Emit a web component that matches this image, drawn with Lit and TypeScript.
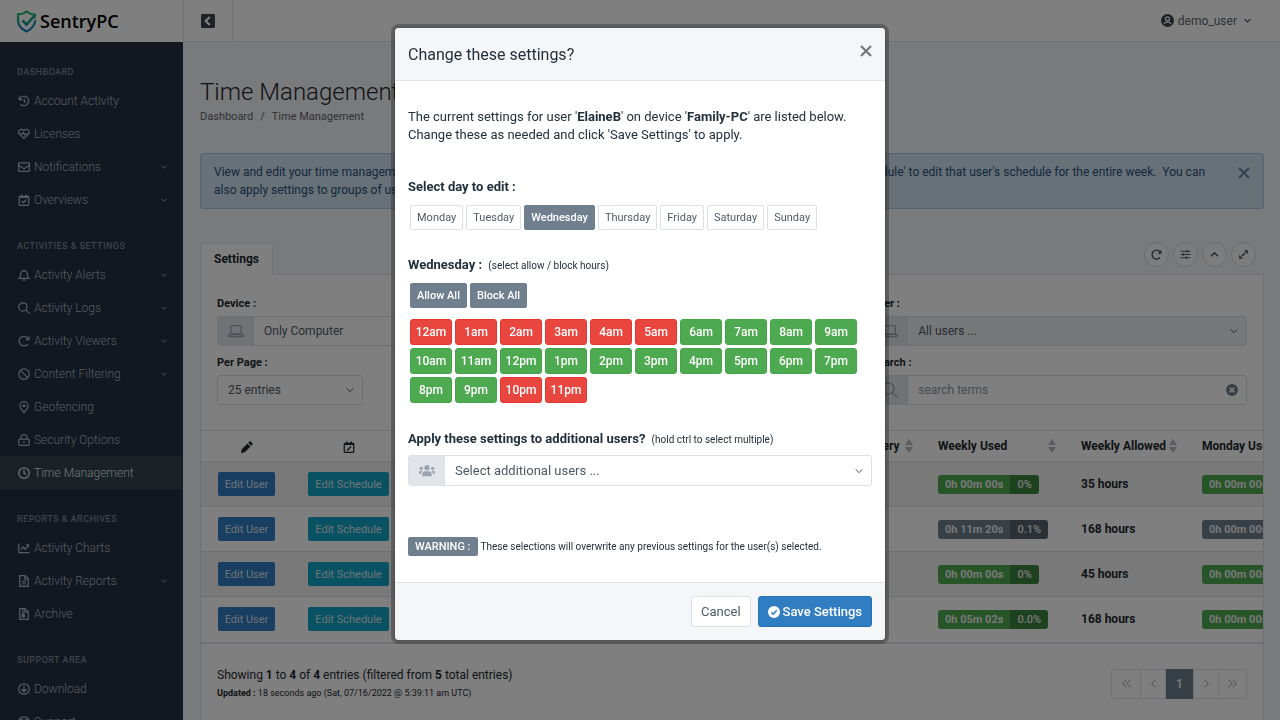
import { LitElement, html, css, svg, nothing } from "lit";
import { customElement, property, state } from "lit/decorators.js";
import { classMap } from "lit/directives/class-map.js";

const glyphs: Record<string, unknown> = {
  history: svg`<path d="M2.500 3v6h6M3 8.500A9.500 9.500 0 1 1 5 18.500" /><path d="M12.500 7v5.500l3.500 2.500" />`,
  heart: svg`<path d="M12 21 3 12.200a5.800 5.800 0 0 1 0-8 5.600 5.600 0 0 1 8 0l1 1 1-1a5.600 5.600 0 0 1 8 0 5.800 5.800 0 0 1 0 8z" /><path d="M4.500 11.500h4.500l1.500-2.500 3 5 1.500-2.500h4.500" />`,
  mail: svg`<rect x="1.200" y="3.500" width="21.600" height="17" rx="1.500" /><path d="M1.500 8.500 12 15.500l10.500-7" />`,
  calendarCheck: svg`<rect x="2.500" y="4.500" width="19" height="18" rx="1.500" /><path d="M7.500 1V6M16.500 1V6M3 6.500h18" stroke-width="3" /><path d="m7.500 14 3.500 3.500 6-6.500" />`,
  calendarEdit: svg`<rect x="2.500" y="4.500" width="19" height="18" rx="1.500" /><path d="M7.500 1V6M16.500 1V6M3 6.500h18" stroke-width="3" /><path d="m8 19 8-8" stroke-width="3" />`,
  bell: svg`<path d="M2.500 18.500h19c-2.300-2.200-3-4.500-3-8.500a6.500 6.500 0 0 0-13 0c0 4-.700 6.300-3 8.500zM12 1V4" /><path d="M9.500 22h5" stroke-width="3" />`,
  search: svg`<circle cx="9.800" cy="9.800" r="8.300" /><path d="m15.800 15.800 7.500 7.500" />`,
  rotate: svg`<path d="M19.500 18.500A9.700 9.700 0 1 1 19 5.500" /><path d="M23 1.500v9h-9z" fill="currentColor" stroke="none" />`,
  ban: svg`<circle cx="12" cy="12" r="10.500" /><path d="m4.800 4.800 14.400 14.400" />`,
  pin: svg`<path d="M12 23C6.500 16.800 4 13.300 4 9.300a8 8 0 0 1 16 0c0 4-2.500 7.500-8 13.700z" /><circle cx="12" cy="9.500" r="3.200" fill="currentColor" stroke="none" />`,
  lock: svg`<rect x="1.800" y="10" width="20.400" height="12.700" rx="1.500" /><path d="M6 9.500V7a6 6 0 0 1 12 0v2.500" /><path d="M12 14v4.500" />`,
  clock: svg`<circle cx="12" cy="12" r="10.500" /><path d="M12 5.500v7l4.500 2.500" />`,
  chart: svg`<path d="M1.500 3v18H23M6 15.500l4.500-5.500 4 4.500 6-8" /><path d="M15 4.500h7v7z" fill="currentColor" stroke="none" />`,
  file: svg`<path d="M3.500 1.200H14l6.500 6v15.600h-17z" /><path d="M13.500 1.500v6.500h6.500M8 12.500h8M8 17.500h8" />`,
  zip: svg`<path d="M3.500 1.200H14l6.500 6v15.600h-17z" /><path d="M13.500 1.500v6.500h6.500M10 3v9" /><rect x="8.500" y="13" width="4" height="5" fill="currentColor" />`,
  download: svg`<circle cx="12" cy="12" r="10.500" /><path d="M12 5.500v11.500M7 12.500l5 5 5-5" />`,
  lifebuoy: svg`<circle cx="12" cy="12" r="10.500" /><circle cx="12" cy="12" r="4" /><path d="m4.500 4.500 4.500 4.500M19.500 4.500l-4.500 4.500M4.500 19.500l4.500-4.500M19.500 19.500l-4.500-4.500" />`,
  down: svg`<path d="m2 7 10 10 10-10" />`,
  up: svg`<path d="m4.500 16 7.500-8 7.500 8" />`,
  left: svg`<path d="m15.500 4.500-7.500 7.500 7.500 7.500" />`,
  right: svg`<path d="m8.500 4.500 7.500 7.500-7.500 7.500" />`,
  first: svg`<path d="m11.500 4-8 8 8 8M20.500 4l-8 8 8 8" />`,
  last: svg`<path d="m12.500 4 8 8-8 8M3.500 4l8 8-8 8" />`,
  close: svg`<path d="m2 2 20 20M22 2 2 22" />`,
  laptop: svg`<rect x="4" y="4" width="16" height="12.500" rx="1.500" /><path d="M1 17.500h22c0 2-1 3-3 3H4c-2 0-3-1-3-3z" />`,
  sliders: svg`<path d="M1 5h22M1 12h22M1 19h22" stroke-width="2" /><path d="M16 2.500v5M7.500 9.500v5M14 16.500v5" stroke-width="3" />`,
  expand: svg`<path d="m8 16 8-8" /><path d="M13 2.500h8.500v8.500zM2.500 13v8.500h8.500z" fill="currentColor" stroke="none" />`,
  pencil: svg`<path d="m0 24 1.500-7.500L13 5l6 6L7.500 22.500zM14.500 3.500l2.500-2.500a1.800 1.800 0 0 1 2.500 0l3.500 3.500a1.800 1.800 0 0 1 0 2.500l-2.500 2.500z" fill="currentColor" stroke="none" />`,
  user: svg`<circle cx="12" cy="12" r="12" fill="currentColor" stroke="none" /><circle cx="12" cy="9" r="3.600" stroke="#fff" fill="none" stroke-width="2.200" /><path d="M5.500 18.500c1-3 3.500-3.500 6.500-3.500s5.500.500 6.500 3.500" stroke="#fff" stroke-width="2.200" />`,
  clear: svg`<circle cx="12" cy="12" r="12" fill="currentColor" stroke="none" /><path d="m7.500 7.500 9 9M16.500 7.500l-9 9" stroke="#fff" stroke-width="3.500" />`,
  check: svg`<circle cx="12" cy="12" r="12" fill="currentColor" stroke="none" /><path d="m6.500 12.500 4 4 7-8" stroke="#317dc2" stroke-width="3" />`,
  collapse: svg`<rect width="24" height="24" rx="2.500" fill="currentColor" stroke="none" /><path d="m15 5-7 7 7 7" stroke="#fff" stroke-width="3.500" />`,
  users: svg`<g fill="currentColor" stroke="none"><circle cx="12" cy="7" r="4" /><path d="M5 20v-3c0-3 2-4.500 4-4.500h6c2 0 4 1.500 4 4.500v3z" /><circle cx="3.500" cy="8" r="2.500" /><circle cx="20.500" cy="8" r="2.500" /><path d="M0 16v-1.500c0-1.800 1-2.800 2.500-2.800h2.800C4 13 3.500 14.500 3.500 16zM24 16v-1.500c0-1.800-1-2.800-2.500-2.800h-2.800c1.300 1.300 1.800 2.800 1.800 4.300z" /></g>`,
};

@customElement("ui-icon")
class UiIcon extends LitElement {
  @property() name = "";
  @property({ type: Number }) weight = 2;
  static styles = css`
    :host { display: inline-flex; width: 12px; height: 12px; flex: none; }
    svg { width: 100%; height: 100%; fill: none; stroke: currentColor; overflow: visible; }
  `;
  render() {
    return html`<svg viewBox="0 0 24 24" stroke-width=${this.weight} aria-hidden="true">${glyphs[this.name]}</svg>`;
  }
}

type NavItem = [icon: string, label: string, expands?: boolean];
const nav: { title: string; items: NavItem[] }[] = [
  { title: "DASHBOARD", items: [["history", "Account Activity"], ["heart", "Licenses"], ["mail", "Notifications", true], ["calendarCheck", "Overviews", true]] },
  {
    title: "ACTIVITIES & SETTINGS",
    items: [["bell", "Activity Alerts", true], ["search", "Activity Logs", true], ["rotate", "Activity Viewers", true], ["ban", "Content Filtering", true], ["pin", "Geofencing"], ["lock", "Security Options"], ["clock", "Time Management"]],
  },
  { title: "REPORTS & ARCHIVES", items: [["chart", "Activity Charts"], ["file", "Activity Reports", true], ["zip", "Archive"]] },
  { title: "SUPPORT AREA", items: [["download", "Download"], ["lifebuoy", "Support", true]] },
];

const rows = [
  { user: "ElaineB", device: "Family-PC", every: "5 min", used: "0h 00m 00s", pct: "0%", allowed: "35 hours", tone: "green" },
  { user: "JacobB", device: "Family-PC", every: "5 min", used: "0h 11m 20s", pct: "0.1%", allowed: "168 hours", tone: "slate" },
  { user: "MarkB", device: "Office-PC", every: "5 min", used: "0h 00m 00s", pct: "0%", allowed: "45 hours", tone: "green" },
  { user: "SarahB", device: "Laptop", every: "5 min", used: "0h 05m 02s", pct: "0.0%", allowed: "168 hours", tone: "green" },
];

const days = ["Monday", "Tuesday", "Wednesday", "Thursday", "Friday", "Saturday", "Sunday"];
const hourLabel = (h: number) => `${h % 12 || 12}${h < 12 ? "am" : "pm"}`;

const shared = css`
  * { box-sizing: border-box; }
  button, input, select { font: inherit; margin: 0; }
  button { cursor: pointer; display: inline-flex; align-items: center; justify-content: center; white-space: nowrap; }
  a { color: inherit; text-decoration: none; }
  .field { display: flex; height: 31px; border: 1px solid #dbe0e6; border-radius: 3px; overflow: hidden; background: #fff; color: #4d5a66; }
  .addon { width: 36px; flex: none; display: flex; align-items: center; justify-content: center; background: #e1e5ea; border-right: 1px solid #dbe0e6; color: #9aa5b0; }
  .addon ui-icon { width: 16px; height: 16px; }
  .control { flex: 1; min-width: 0; display: grid; align-items: center; }
  .control > * { grid-area: 1 / 1; }
  .control select, .control input { width: 100%; height: 100%; appearance: none; border: 0; outline: 0; background: transparent; color: inherit; padding: 0 10px; opacity: 1; }
  .control input::placeholder { color: #8c98a4; opacity: 1; }
  .control ui-icon { justify-self: end; margin-right: 8px; width: 8px; height: 8px; pointer-events: none; }
`;

@customElement("settings-dialog")
class SettingsDialog extends LitElement {
  @state() private day = "Wednesday";
  @state() private blocked = new Set([0, 1, 2, 3, 4, 5, 22, 23]);

  static styles = [shared, css`
    :host { display: block; width: 490px; max-width: 100%; border-radius: 4px; background: #fff; color: #22303c; box-shadow: 0 0 0 4px rgba(0, 0, 0, 0.25), 0 0 2px 1px rgba(0, 0, 0, 0.2); font-size: 13px; line-height: 18px; overflow: hidden; }
    header { display: flex; justify-content: space-between; height: 53px; padding: 0 13px; background: #f4f6f8; border-bottom: 1px solid #e1e5ea; }
    h2 { margin: 0; font-size: 16px; font-weight: 400; line-height: 54px; }
    .close { border: 0; background: none; padding: 0; height: 46px; color: #777; }
    .close ui-icon { width: 12px; height: 12px; }
    .body { padding: 27px 13px 26px; }
    p { margin: 0; }
    b, h3 { font-weight: 700; }
    h3 { margin: 0; font-size: 13px; line-height: 18px; }
    h3 small { line-height: 1; }
    h3 small, .warn small { font-size: 10px; font-weight: 400; margin-left: 3px; }
    .days { margin: 34px 0 26px; }
    .buttons { display: flex; flex-wrap: wrap; gap: 3px; padding: 9px 2px 0; }
    .chip { height: 25px; padding: 0 6px; border: 1px solid #dbe0e6; border-radius: 2px; background: #fff; color: #4d5a66; font-size: 11px; }
    .chip.on { background: #6f7f8e; border-color: #6f7f8e; color: #fff; font-weight: 500; }
    .hours { display: grid; grid-template-columns: repeat(10, 42px); gap: 3px; padding: 11px 2px 0; }
    .hour { height: 26px; padding: 0; border: 1px solid #45a549; border-radius: 3px; background: #4eaa50; color: #fff; font-size: 12px; font-weight: 500; }
    .hour.blocked { background: #ea4640; border-color: #e6342e; }
    .extra { margin: 27px 0 51px; }
    .extra .field { margin-top: 7px; }
    .warn { display: flex; align-items: center; }
    .tag { padding: 0 7px; border-radius: 2px; background: #6f7f8e; color: #fff; font-size: 11px; font-weight: 500; line-height: 19px; }
    footer { display: flex; justify-content: flex-end; gap: 7px; padding: 13px; background: #f4f6f8; border-top: 1px solid #e1e5ea; }
    .btn { height: 31px; padding: 0 9px; gap: 3px; border: 1px solid #dbe0e6; border-radius: 3px; background: #fff; color: #4d5a66; font-size: 13px; }
    .btn.primary { background: #317dc2; border-color: #2672b8; color: #fff; font-weight: 500; }
  `];

  private toggle(h: number) {
    const next = new Set(this.blocked);
    next.has(h) ? next.delete(h) : next.add(h);
    this.blocked = next;
  }

  render() {
    const all = [...Array(24).keys()];
    return html`
      <header>
        <h2>Change these settings?</h2>
        <button class="close" aria-label="Close"><ui-icon name="close" weight="4.500"></ui-icon></button>
      </header>
      <div class="body">
        <p>The current settings for user '<b>ElaineB</b>' on device '<b>Family-PC</b>' are listed below.<br />Change these as needed and click 'Save Settings' to apply.</p>
        <section class="days">
          <h3>Select day to edit :</h3>
          <div class="buttons">
            ${days.map((d) => html`<button class=${classMap({ chip: true, on: d === this.day })} @click=${() => (this.day = d)}>${d}</button>`)}
          </div>
        </section>
        <section>
          <h3>${this.day} : <small>(select allow / block hours)</small></h3>
          <div class="buttons">
            <button class="chip on" @click=${() => (this.blocked = new Set())}>Allow All</button>
            <button class="chip on" @click=${() => (this.blocked = new Set(all))}>Block All</button>
          </div>
          <div class="hours">
            ${all.map((h) => html`<button class=${classMap({ hour: true, blocked: this.blocked.has(h) })} @click=${() => this.toggle(h)}>${hourLabel(h)}</button>`)}
          </div>
        </section>
        <section class="extra">
          <h3><label for="extra">Apply these settings to additional users?</label> <small>(hold ctrl to select multiple)</small></h3>
          <div class="field">
            <span class="addon"><ui-icon name="users"></ui-icon></span>
            <span class="control"><select id="extra"><option>Select additional users ...</option></select><ui-icon name="down" weight="3"></ui-icon></span>
          </div>
        </section>
        <div class="warn"><span class="tag">WARNING :</span><small>These selections will overwrite any previous settings for the user(s) selected.</small></div>
      </div>
      <footer>
        <button class="btn">Cancel</button>
        <button class="btn primary"><ui-icon name="check"></ui-icon>Save Settings</button>
      </footer>
    `;
  }
}

@customElement("app-root")
class AppRoot extends LitElement {
  static styles = [shared, css`
    :host { display: block; height: 100vh; overflow: hidden; font-family: Roboto, "Liberation Sans", sans-serif; font-size: 12px; color: #22282e; }
    .app { display: grid; grid-template: 42px minmax(0, 1fr) / 183px minmax(0, 1fr); height: 100%; background: #f2f4f7; }
    .brand, .topbar { background: #fff; display: flex; align-items: center; }
    .brand { gap: 3px; padding-left: 16px; font: 600 18px/42px "Open Sans", "Noto Sans", sans-serif; color: #000; }
    .brand svg { width: 21px; height: 23px; }
    .topbar { border-left: 1px solid #dfe3e8; border-bottom: 1px solid #dfe3e8; justify-content: space-between; padding-right: 29px; }
    .collapse { width: 49px; height: 100%; border: 0; border-right: 1px solid #dfe3e8; background: none; color: #3c454e; padding: 0; }
    .collapse ui-icon { width: 14px; height: 14px; }
    .account { border: 0; background: none; padding: 0; gap: 4px; color: #5c6670; }
    .account ui-icon { width: 13px; height: 13px; color: #3c454e; }
    .account .caret { width: 7px; height: 7px; margin-left: 3px; }
    .side { background: #223044; color: #aeb6bf; overflow: hidden; }
    .side h6 { margin: 0; padding: 22px 17px 4px; font-size: 9px; line-height: 16px; font-weight: 500; letter-spacing: 0.05em; color: #7d8794; }
    .side a { display: flex; align-items: center; gap: 4px; height: 33px; padding: 0 16px 0 18px; font-weight: 300; }
    .side a span { flex: 1; }
    .side a .caret { width: 6px; height: 6px; }
    .side a.active { background: #36444f; color: #dfe3e8; }
    .page { padding: 34px 16px 0 17px; display: flex; flex-direction: column; min-width: 0; overflow: hidden; }
    h1 { margin: 0; font-size: 24px; font-weight: 300; line-height: 32px; }
    .crumbs { display: flex; gap: 7px; font-size: 11px; line-height: 18px; color: #5c6670; }
    .notice { display: flex; justify-content: space-between; align-items: flex-start; margin: 27px 0 34px; padding: 9px 13px; border: 1px solid #a9c9e6; border-radius: 3px; background: #d2e2f1; color: #23507c; line-height: 18px; white-space: nowrap; }
    .notice button { border: 0; background: none; padding: 4px 0; color: #5f86ab; }
    .tabs { display: flex; justify-content: space-between; align-items: flex-start; padding-right: 8px; height: 31px; }
    .tab { position: relative; z-index: 1; height: 32px; padding: 0 13px; border: 1px solid #dfe3e8; border-bottom-color: #fff; border-radius: 3px 3px 0 0; background: #fff; font-weight: 700; line-height: 30px; }
    .tools { display: flex; gap: 4px; align-self: center; padding-bottom: 8px; }
    .tools button { width: 25px; height: 25px; padding: 0; border: 1px solid #d5d9de; border-radius: 50%; background: #fafafa; color: #46525e; }
    .tools ui-icon { width: 11px; height: 11px; }
    .card { flex: 1; background: #fff; border: 1px solid #dfe3e8; border-bottom: 0; min-height: 460px; }
    .filters { display: grid; grid-template-columns: 5fr 3fr; gap: 8px 28px; padding: 20px 16px 25px; }
    .filters label { display: block; font-size: 11px; font-weight: 700; line-height: 18px; margin-bottom: 3px; }
    .filters .field { height: 30px; }
    .filters .short { width: 146px; }
    .filters .disabled { background: #edf0f4; }
    .clear { justify-self: end; margin-right: 8px; border: 0; background: none; padding: 0; color: #76818c; }
    .control .clear ui-icon { margin: 0; width: 12px; height: 12px; }
    .scroller { overflow: hidden; border-bottom: 2px solid #dfe3e8; }
    table { border-collapse: collapse; table-layout: fixed; width: 1200px; font-size: 12px; font-weight: 700; text-align: left; }
    th, td { padding: 0 17px; border-top: 1px solid #dfe3e8; white-space: nowrap; }
    th { height: 31px; }
    th.sort { padding-right: 8px; }
    td { height: 45px; }
    tbody tr:nth-child(odd) { background: #f2f3f4; }
    th.mid, td.mid { text-align: center; padding: 0; }
    .mid ui-icon { vertical-align: middle; }
    .head { display: flex; align-items: center; justify-content: space-between; }
    .arrows { width: 8px; height: 14px; fill: #b5b9be; }
    .c1 { width: 91px; } .c2 { width: 113px; } .c3 { width: 196px; } .c4 { width: 221px; } .c5 { width: 99px; } .c6 { width: 143px; } .c7 { width: 121px; }
    .act { height: 24px; padding: 0 7px; border: 0; border-radius: 2px; background: #317dc2; color: #dde6ee; font-size: 11px; font-weight: 400; }
    .act.teal { background: #13a5c8; }
    .badge { display: inline-flex; border-radius: 3px; overflow: hidden; background: #4eaa50; color: #f0f0f0; font-size: 11px; line-height: 19px; }
    .badge span { padding: 0 7px; }
    .badge span + span { background: rgba(0, 0, 0, 0.22); font-weight: 500; }
    .badge.slate { background: #6f7f8e; }
    .foot { display: flex; justify-content: space-between; padding: 22px 16px; }
    .foot p { margin: 0; line-height: 18px; }
    .foot .small { font-size: 9px; }
    .pager { display: flex; height: 30px; border: 1px solid #dfe3e8; border-radius: 3px; margin-top: 3px; }
    .pager button { width: 25px; border: 0; border-left: 1px solid #dfe3e8; background: none; color: #84909c; padding: 0; }
    .pager button.wide { width: 28px; }
    .pager button:first-child { border-left: 0; }
    .pager button.now { background: #6f7f8e; color: #fff; margin: -1px 0; width: 28px; font-weight: 500; }
    .pager ui-icon { width: 11px; height: 11px; }
    .backdrop { position: fixed; inset: 0; z-index: 10; background: rgba(0, 0, 0, 0.5); display: flex; justify-content: center; align-items: flex-start; padding-top: 28px; }
  `];

  private sortHead(label: string) {
    return html`<th class="sort"><span class="head">${label}<svg class="arrows" viewBox="0 0 8 14"><path d="M4 0l4 6H0zM0 8h8l-4 6z" /></svg></span></th>`;
  }

  render() {
    return html`
      <div class="app">
        <div class="brand">
          <svg viewBox="0 0 21 23" fill="none" stroke="url(#shield)" stroke-width="2.200">
            <defs><linearGradient id="shield" gradientUnits="userSpaceOnUse" x1="0" y1="0" x2="0" y2="23"><stop offset="0.200" stop-color="#1fb574" /><stop offset="1" stop-color="#1273c9" /></linearGradient></defs>
            <path d="M18.500 8.500V4.500C15 4.500 13 3.500 10.500 1.500 8 3.500 5.500 4.300 2 4.300v6C2 15.500 5 19 10.500 21.500 16 19 18.800 15.500 19.300 10" />
            <path d="m6.500 10.500 4 4 9-10" stroke-width="2.600" />
          </svg>
          SentryPC
        </div>
        <div class="topbar">
          <button class="collapse" aria-label="Collapse menu"><ui-icon name="collapse"></ui-icon></button>
          <button class="account"><ui-icon name="user"></ui-icon>demo_user<ui-icon class="caret" name="down" weight="3.500"></ui-icon></button>
        </div>
        <nav class="side">
          ${nav.map((g) => html`
            <h6>${g.title}</h6>
            ${g.items.map(([icon, label, expands]) => html`
              <a href="#" class=${classMap({ active: label === "Time Management" })}>
                <ui-icon name=${icon} weight="2.500"></ui-icon><span>${label}</span>${expands ? html`<ui-icon class="caret" name="down" weight="3.500"></ui-icon>` : nothing}
              </a>`)}
          `)}
        </nav>
        <main class="page">
          <h1>Time Management</h1>
          <div class="crumbs"><a href="#">Dashboard</a><span>/</span><span>Time Management</span></div>
          <div class="notice">
            <span>View and edit your time management settings for each user below. &nbsp;Click 'Edit User' to edit that user's limits, or click 'Edit Schedule' to edit that user's schedule for the entire week. &nbsp;You can<br />also apply settings to groups of users at the same time.</span>
            <button aria-label="Dismiss"><ui-icon name="close" weight="4"></ui-icon></button>
          </div>
          <div class="tabs">
            <a href="#" class="tab">Settings</a>
            <div class="tools">
              ${[["rotate", "Refresh"], ["sliders", "Options"], ["up", "Collapse"], ["expand", "Expand"]].map(([i, l]) => html`<button aria-label=${l}><ui-icon name=${i} weight="3"></ui-icon></button>`)}
            </div>
          </div>
          <div class="card">
            <div class="filters">
              <div>
                <label for="device">Device :</label>
                <div class="field"><span class="addon"><ui-icon name="laptop"></ui-icon></span><span class="control"><select id="device"><option>Only Computer</option></select><ui-icon name="down" weight="3"></ui-icon></span></div>
              </div>
              <div>
                <label for="user">User :</label>
                <div class="field disabled"><span class="addon"><ui-icon name="laptop"></ui-icon></span><span class="control"><select id="user"><option>All users ...</option></select><ui-icon name="down" weight="3"></ui-icon></span></div>
              </div>
              <div>
                <label for="count">Per Page :</label>
                <div class="field short"><span class="control"><select id="count"><option>25 entries</option></select><ui-icon name="down" weight="3"></ui-icon></span></div>
              </div>
              <div>
                <label for="search">Search :</label>
                <div class="field"><span class="addon"><ui-icon name="search"></ui-icon></span><span class="control"><input id="search" placeholder="search terms" /><button class="clear" aria-label="Clear"><ui-icon name="clear"></ui-icon></button></span></div>
              </div>
            </div>
            <div class="scroller">
              <table>
                <colgroup><col class="c1" /><col class="c2" /><col class="c3" /><col class="c4" /><col class="c5" /><col class="c6" /><col class="c7" /><col /></colgroup>
                <thead>
                  <tr>
                    <th class="mid"><ui-icon name="pencil"></ui-icon></th>
                    <th class="mid"><ui-icon name="calendarEdit" weight="2.500"></ui-icon></th>
                    ${["User", "Device", "Warn Every", "Weekly Used", "Weekly Allowed", "Monday Used"].map((l) => this.sortHead(l))}
                  </tr>
                </thead>
                <tbody>
                  ${rows.map((r) => html`<tr>
                    <td class="mid"><button class="act">Edit User</button></td>
                    <td class="mid"><button class="act teal">Edit Schedule</button></td>
                    <td>${r.user}</td>
                    <td>${r.device}</td>
                    <td>${r.every}</td>
                    <td><span class="badge ${r.tone}"><span>${r.used}</span><span>${r.pct}</span></span></td>
                    <td>${r.allowed}</td>
                    <td><span class="badge ${r.tone}"><span>0h 00m 00s</span><span>0%</span></span></td>
                  </tr>`)}
                </tbody>
              </table>
            </div>
            <div class="foot">
              <div>
                <p>Showing <b>1</b> to <b>4</b> of <b>4</b> entries (filtered from <b>5</b> total entries)</p>
                <p class="small"><b>Updated :</b> 18 seconds ago (Sat, 07/16/2022 @ 5:39:11 am UTC)</p>
              </div>
              <div class="pager">
                <button class="wide" aria-label="First"><ui-icon name="first"></ui-icon></button>
                <button aria-label="Previous"><ui-icon name="left"></ui-icon></button>
                <button class="now">1</button>
                <button aria-label="Next"><ui-icon name="right"></ui-icon></button>
                <button class="wide" aria-label="Last"><ui-icon name="last"></ui-icon></button>
              </div>
            </div>
          </div>
        </main>
      </div>
      <div class="backdrop"><settings-dialog role="dialog" aria-label="Change these settings?"></settings-dialog></div>
    `;
  }
}
